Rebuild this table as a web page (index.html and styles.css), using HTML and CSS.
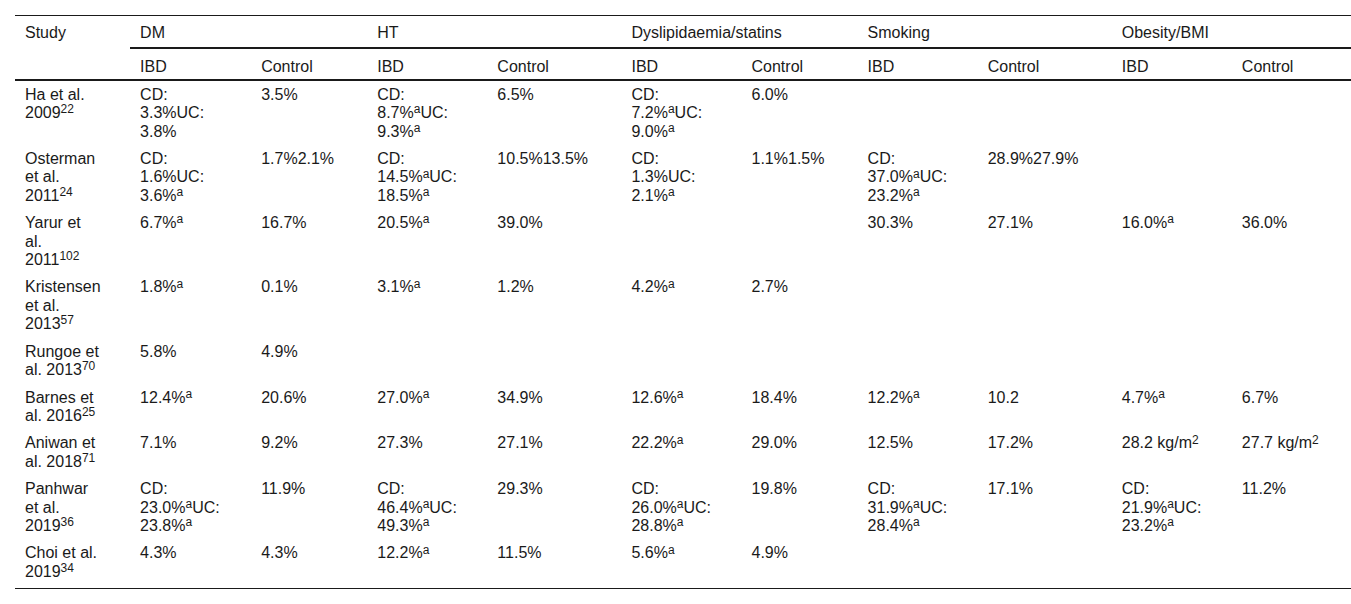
FILE: index.html
```html
<!DOCTYPE html>
<html lang="en">
<head>
<meta charset="utf-8">
<title>Table</title>
<link rel="stylesheet" href="styles.css">
</head>
<body>
<div class="wrap">
<table class="tbl">
<colgroup>
<col class="c-study"><col class="c-ibd"><col class="c-ctl"><col class="c-ibd2"><col class="c-ctl2"><col class="c-ibd2"><col class="c-ctl"><col class="c-ibd2"><col class="c-ctl2"><col class="c-ibd2"><col class="c-last">
</colgroup>
<thead>
<tr class="h1">
<th rowspan="2" class="study">Study</th>
<th colspan="2" class="grp">DM</th>
<th colspan="2" class="grp">HT</th>
<th colspan="2" class="grp">Dyslipidaemia/statins</th>
<th colspan="2" class="grp">Smoking</th>
<th colspan="2" class="grp">Obesity/BMI</th>
</tr>
<tr class="h2">
<th>IBD</th><th>Control</th><th>IBD</th><th>Control</th><th>IBD</th><th>Control</th><th>IBD</th><th>Control</th><th>IBD</th><th>Control</th>
</tr>
</thead>
<tbody>
<tr>
<td class="st">Ha et al. 2009<sup>22</sup></td>
<td>CD: 3.3%UC: 3.8%</td>
<td>3.5%</td>
<td>CD: 8.7%<sup>a</sup>UC: 9.3%<sup>a</sup></td>
<td>6.5%</td>
<td>CD: 7.2%<sup>a</sup>UC: 9.0%<sup>a</sup></td>
<td>6.0%</td>
<td></td><td></td><td></td><td></td>
</tr>
<tr>
<td class="st">Osterman et al. 2011<sup>24</sup></td>
<td>CD: 1.6%UC: 3.6%<sup>a</sup></td>
<td>1.7%2.1%</td>
<td>CD: 14.5%<sup>a</sup>UC: 18.5%<sup>a</sup></td>
<td>10.5%13.5%</td>
<td>CD: 1.3%UC: 2.1%<sup>a</sup></td>
<td>1.1%1.5%</td>
<td>CD: 37.0%<sup>a</sup>UC: 23.2%<sup>a</sup></td>
<td>28.9%27.9%</td>
<td></td><td></td>
</tr>
<tr>
<td class="st">Yarur et al. 2011<sup>102</sup></td>
<td>6.7%<sup>a</sup></td>
<td>16.7%</td>
<td>20.5%<sup>a</sup></td>
<td>39.0%</td>
<td></td>
<td></td>
<td>30.3%</td>
<td>27.1%</td>
<td>16.0%<sup>a</sup></td>
<td>36.0%</td>
</tr>
<tr>
<td class="st">Kristensen et al. 2013<sup>57</sup></td>
<td>1.8%<sup>a</sup></td>
<td>0.1%</td>
<td>3.1%<sup>a</sup></td>
<td>1.2%</td>
<td>4.2%<sup>a</sup></td>
<td>2.7%</td>
<td></td><td></td><td></td><td></td>
</tr>
<tr>
<td class="st">Rungoe et al. 2013<sup>70</sup></td>
<td>5.8%</td>
<td>4.9%</td>
<td></td><td></td><td></td><td></td><td></td><td></td><td></td><td></td>
</tr>
<tr>
<td class="st">Barnes et al. 2016<sup>25</sup></td>
<td>12.4%<sup>a</sup></td>
<td>20.6%</td>
<td>27.0%<sup>a</sup></td>
<td>34.9%</td>
<td>12.6%<sup>a</sup></td>
<td>18.4%</td>
<td>12.2%<sup>a</sup></td>
<td>10.2</td>
<td>4.7%<sup>a</sup></td>
<td>6.7%</td>
</tr>
<tr>
<td class="st">Aniwan et al. 2018<sup>71</sup></td>
<td>7.1%</td>
<td>9.2%</td>
<td>27.3%</td>
<td>27.1%</td>
<td>22.2%<sup>a</sup></td>
<td>29.0%</td>
<td>12.5%</td>
<td>17.2%</td>
<td class="nw">28.2 kg/m<sup>2</sup></td>
<td class="nw">27.7 kg/m<sup>2</sup></td>
</tr>
<tr>
<td class="st">Panhwar et al. 2019<sup>36</sup></td>
<td>CD: 23.0%<sup>a</sup>UC: 23.8%<sup>a</sup></td>
<td>11.9%</td>
<td>CD: 46.4%<sup>a</sup>UC: 49.3%<sup>a</sup></td>
<td>29.3%</td>
<td>CD: 26.0%<sup>a</sup>UC: 28.8%<sup>a</sup></td>
<td>19.8%</td>
<td>CD: 31.9%<sup>a</sup>UC: 28.4%<sup>a</sup></td>
<td>17.1%</td>
<td>CD: 21.9%<sup>a</sup>UC: 23.2%<sup>a</sup></td>
<td>11.2%</td>
</tr>
<tr class="last">
<td class="st">Choi et al. 2019<sup>34</sup></td>
<td>4.3%</td>
<td>4.3%</td>
<td>12.2%<sup>a</sup></td>
<td>11.5%</td>
<td>5.6%<sup>a</sup></td>
<td>4.9%</td>
<td></td><td></td><td></td><td></td>
</tr>
</tbody>
</table>
</div>
</body>
</html>
```
FILE: styles.css
```css
html, body {
  margin: 0;
  padding: 0;
  background: #fff;
}
body {
  font-family: "Liberation Sans", Arial, sans-serif;
  font-size: 16px;
  line-height: 18.4px;
  color: #1a1a1a;
}
.wrap {
  padding: 15px 0 0 15px;
}
.tbl {
  border-collapse: collapse;
  table-layout: fixed;
  width: 1336px;
  border-top: 1px solid #1a1a1a;
  border-bottom: 1px solid #1a1a1a;
}
.c-study { width: 115px; }
.c-ibd { width: 121px; }
.c-ctl { width: 116px; }
.c-ibd2 { width: 120px; }
.c-ctl2 { width: 134px; }
.c-last { width: 119px; }
.tbl th,
.tbl td {
  text-align: left;
  vertical-align: top;
  font-weight: normal;
  padding: 5px 28px 4px 10px;
  overflow-wrap: normal;
}
.tbl td.st {
  padding-right: 30px;
}
.tbl .h1 th {
  padding-top: 8px;
  padding-bottom: 5px;
  white-space: nowrap;
}
.tbl .h1 th.grp {
  border-bottom: 2px solid #1a1a1a;
}
.tbl .h2 th {
  padding-top: 9px;
  padding-bottom: 2px;
  border-bottom: 2px solid #1a1a1a;
}
.tbl th.study {
  border-bottom: 2px solid #1a1a1a;
}
.tbl td.nw {
  white-space: nowrap;
  padding-right: 0;
}
.tbl tr.last td {
  padding-bottom: 7px;
}
sup {
  font-size: 75%;
  line-height: 0;
  position: relative;
  vertical-align: baseline;
  top: -0.4em;
}
```
